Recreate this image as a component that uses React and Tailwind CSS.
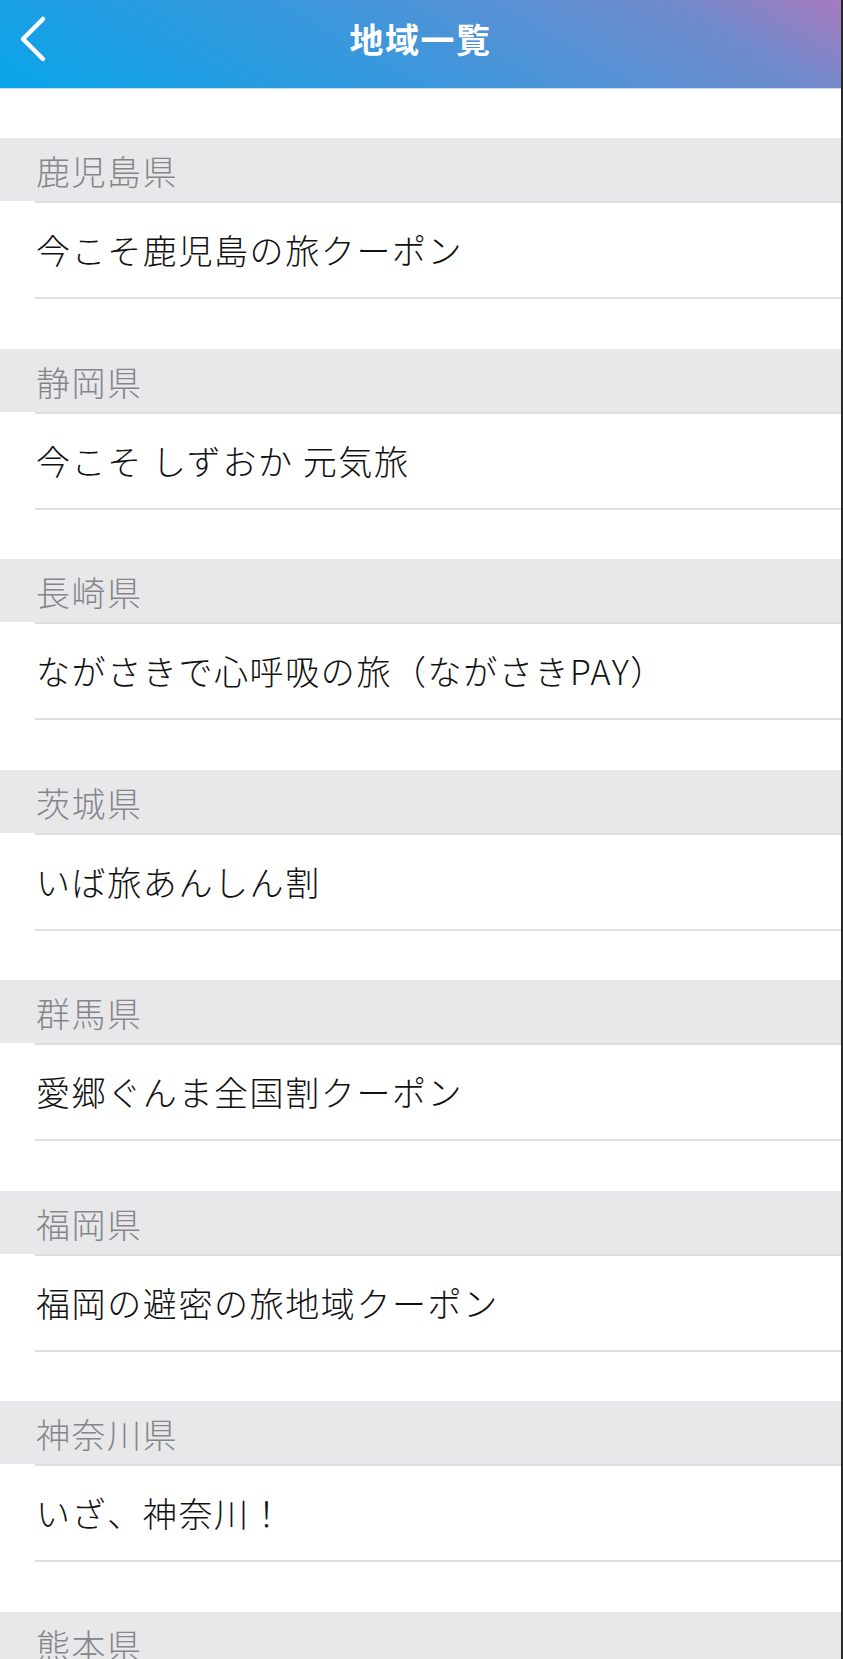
import React from "react";

const sections = [
  ["鹿児島県", "今こそ鹿児島の旅クーポン"],
  ["静岡県", "今こそ しずおか 元気旅"],
  ["長崎県", "ながさきで心呼吸の旅（ながさきPAY）"],
  ["茨城県", "いば旅あんしん割"],
  ["群馬県", "愛郷ぐんま全国割クーポン"],
  ["福岡県", "福岡の避密の旅地域クーポン"],
  ["神奈川県", "いざ、神奈川！"],
  ["熊本県", "くまもと再発見の旅"],
];

export default function App() {
  return (
    <div className="h-[1659px] overflow-hidden bg-white border-r-2 border-[#2b2b2b] font-['Hiragino_Sans','Noto_Sans_CJK_JP',sans-serif]">
      <header className="h-[89px] grid grid-cols-[1fr_auto_1fr] items-center pb-[10px] bg-[linear-gradient(30deg,#08a4e9_0%,#3c97dc_45%,#6f8bcd_82%,#a77abd_100%)] border-b border-[#c9d6e4]">
        <div className="pl-[19px] flex items-center">
          <svg width="30" height="48" viewBox="0 0 30 48" fill="none">
            <path d="M24 4 L4 24 L24 44" stroke="white" strokeWidth="4.5" strokeLinecap="round" strokeLinejoin="round" />
          </svg>
        </div>
        <h1 className="text-white font-bold text-[34px] tracking-[1.5px] leading-none">地域一覧</h1>
        <div />
      </header>
      <div className="h-[49px]" />
      {sections.map(([pref, name]) => (
        <section key={pref}>
          <div className="h-[63px] bg-[#e8e8ea] flex items-center pl-[36px] pt-[3px] text-[34px] font-light tracking-[1.5px] text-[#86868a] leading-none">
            {pref}
          </div>
          <div className="ml-[35px] h-[98px] border-t-2 border-b-2 border-[#dedede] flex items-center pl-[1px] text-[34px] font-light tracking-[1.6px] text-[#111111] leading-none">
            {name}
          </div>
          <div className="h-[49.5px]" />
        </section>
      ))}
    </div>
  );
}
